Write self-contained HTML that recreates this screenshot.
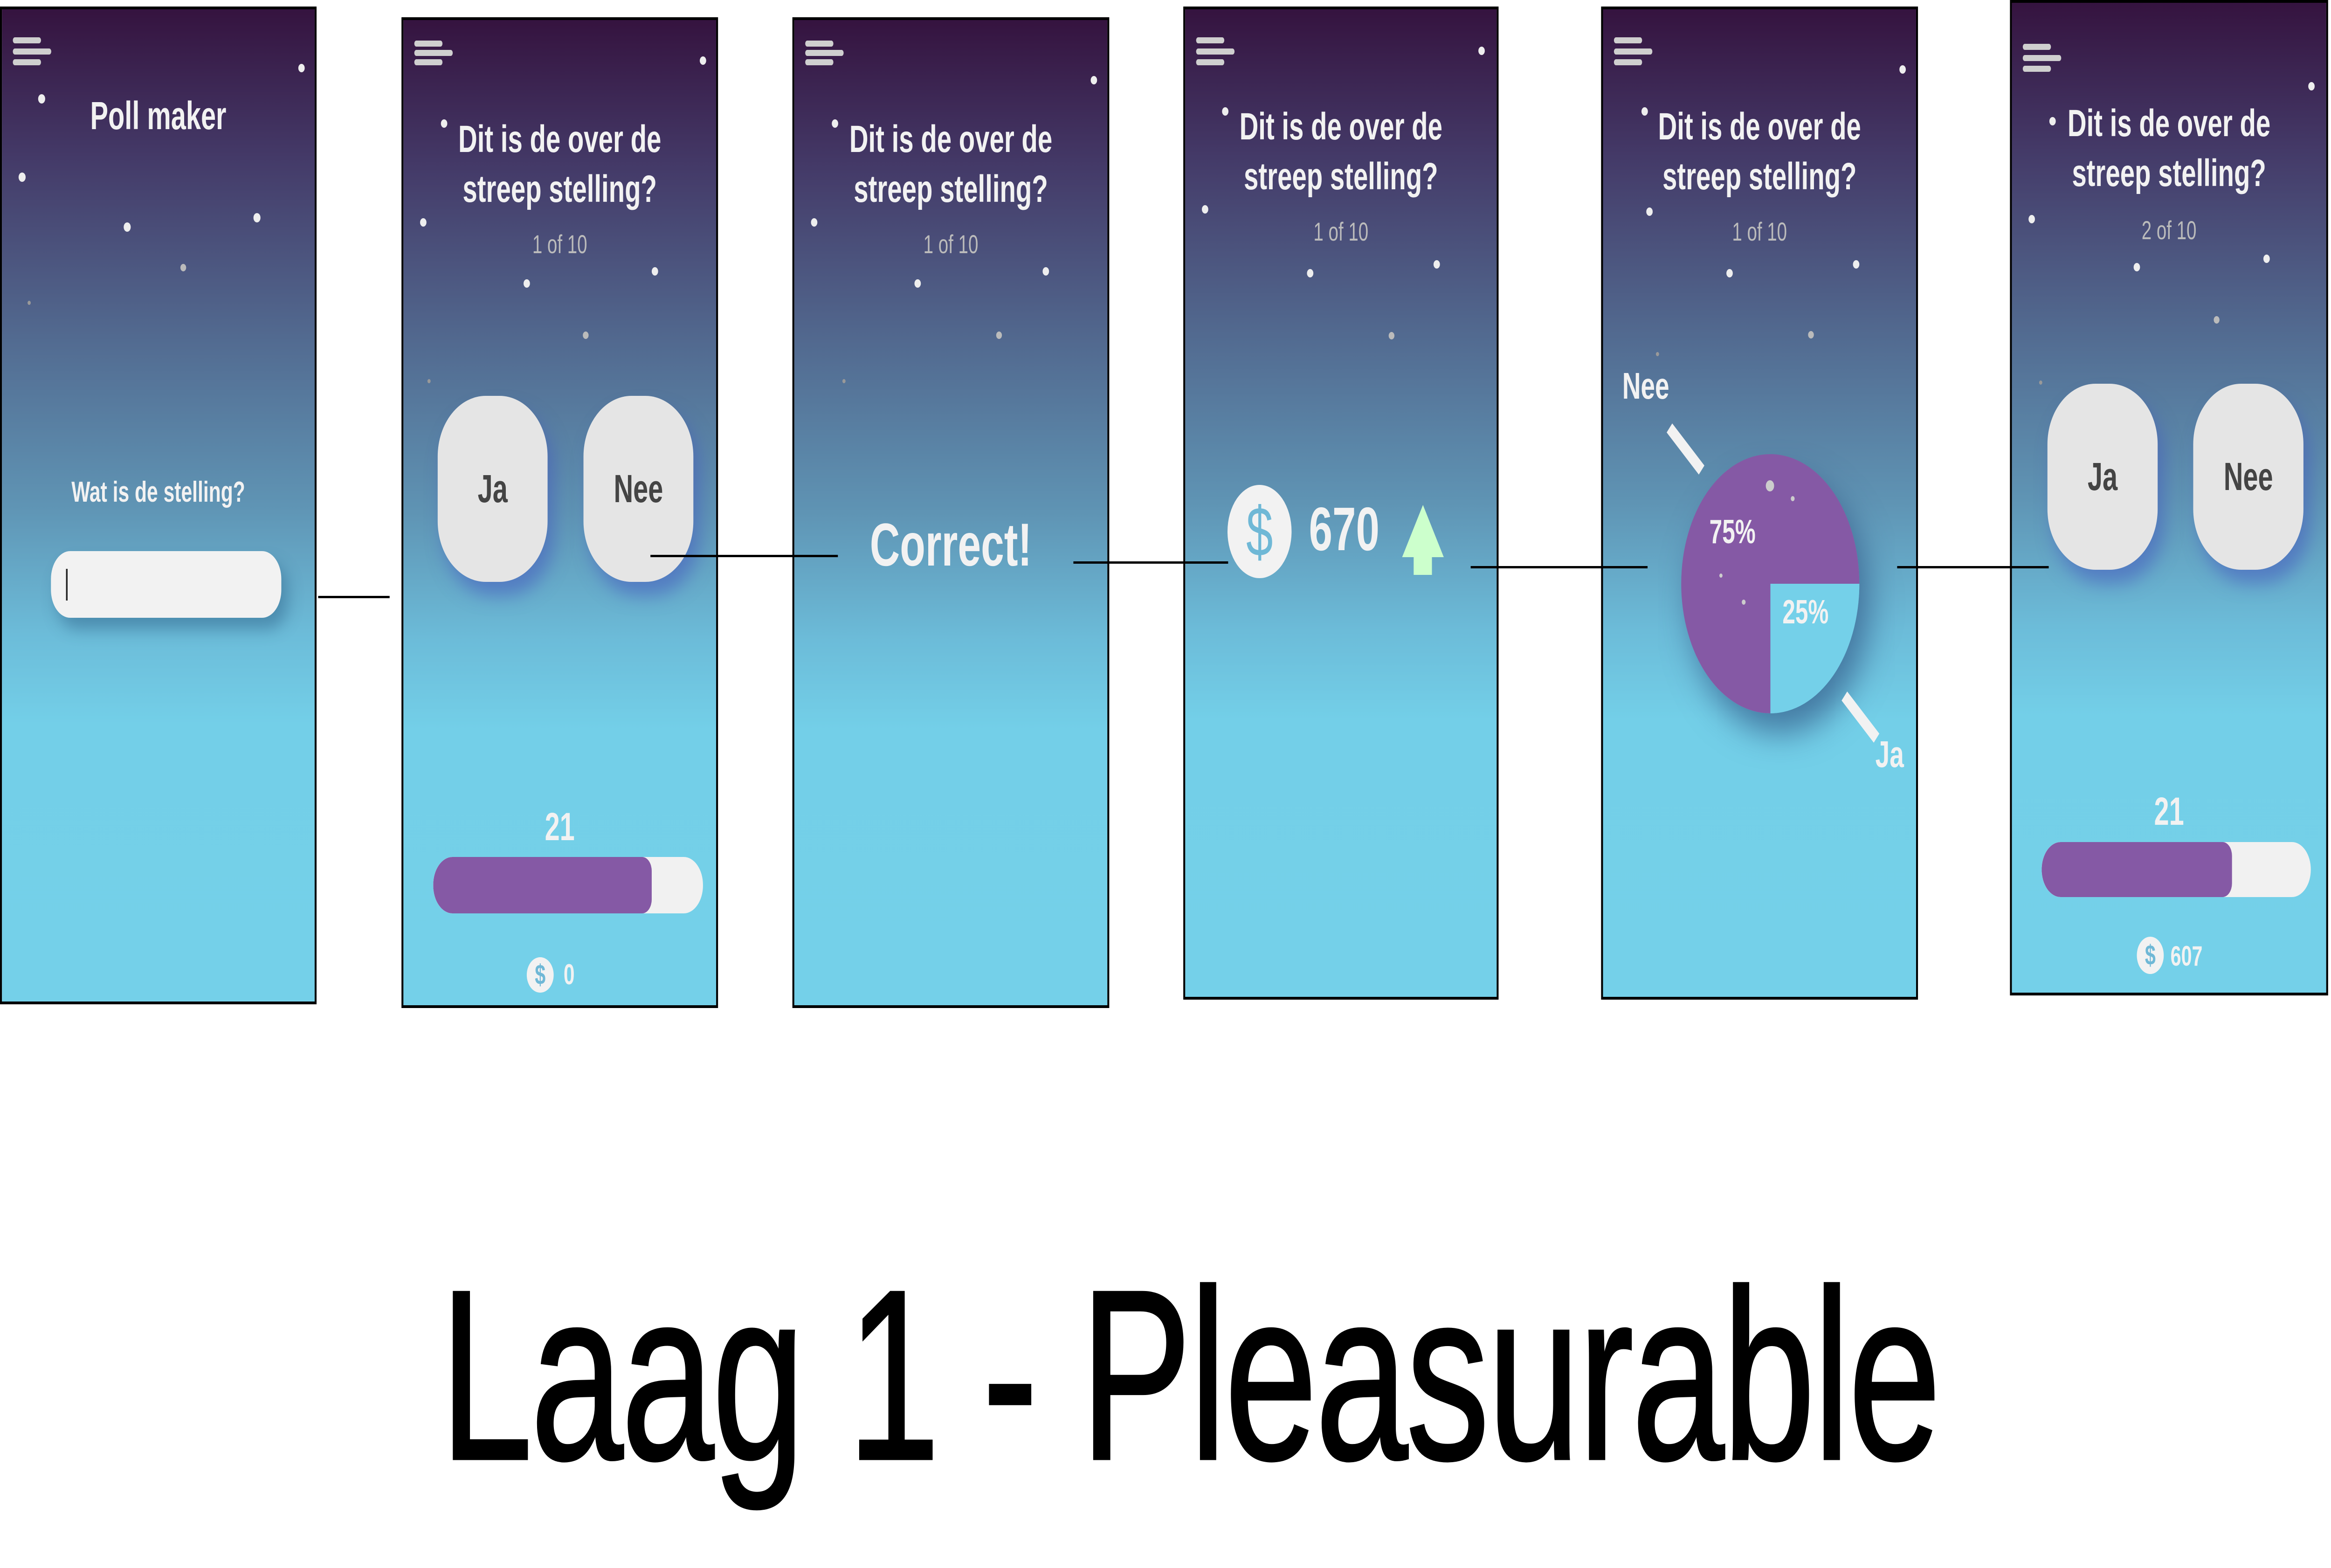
<!DOCTYPE html>
<html><head><meta charset="utf-8"><style>
html,body{margin:0;padding:0;background:#fff;overflow:hidden;}
body{width:100%;height:100%;position:relative;font-family:"Liberation Sans",sans-serif;}
#root{position:absolute;left:0;top:0;width:7275px;height:3363px;overflow:hidden;transform-origin:0 0;background:#fff;}
.s{position:absolute;box-sizing:border-box;border:6px solid #000;overflow:hidden;
background:linear-gradient(180deg,#35133f 0%,#443a68 15%,#526a90 33%,#5f94b4 50%,#6cbcd9 63%,#73cfe8 72%,#74d0e9 100%);}
.a{position:absolute;}
.hb{position:absolute;height:13px;border-radius:7px;background:#cfcfcf;left:34px;}
.t{position:absolute;left:0;right:0;text-align:center;color:#f2f2f2;font-weight:bold;}
.st{position:absolute;border-radius:50%;background:#eee;}
.btn{position:absolute;background:#e5e5e5;border-radius:150px/130px;box-shadow:20px 30px 45px rgba(70,90,190,.55);color:#444;font-weight:bold;font-size:84px;display:flex;align-items:center;justify-content:center;}
.bar{position:absolute;background:#f1f1f1;border-radius:60px;overflow:hidden;}
.bar i{position:absolute;left:0;top:0;bottom:0;background:#8559a5;border-radius:60px 30px 30px 60px;}
.coin{position:absolute;border-radius:50%;background:#f2f2f2;color:#6fb8d6;font-weight:bold;text-align:center;}
.ln{position:absolute;height:5px;background:#000;}
</style></head><body>
<div id="root">
<div class="ln" style="left:993px;top:1278px;width:223px"></div>
<div class="ln" style="left:2030px;top:1190px;width:585px;z-index:5"></div>
<div class="ln" style="left:3350px;top:1204px;width:483px;z-index:5"></div>
<div class="ln" style="left:4590px;top:1214px;width:552px;z-index:5"></div>
<div class="ln" style="left:5921px;top:1214px;width:473px;z-index:5"></div>

<div class="s" style="left:0px;top:14px;width:988px;height:2140px">
<div class="hb" style="top:60px;width:88px"></div><div class="hb" style="top:84px;width:120px"></div><div class="hb" style="top:107px;width:88px"></div>
<div class="st" style="left:113px;top:182px;width:22px;height:20px"></div>
<div class="st" style="left:52px;top:350px;width:22px;height:20px"></div>
<div class="st" style="left:925px;top:117px;width:20px;height:18px"></div>
<div class="st" style="left:380px;top:457px;width:22px;height:20px"></div>
<div class="st" style="left:785px;top:437px;width:22px;height:20px"></div>
<div class="st" style="left:557px;top:546px;width:18px;height:16px;background:#bbb"></div>
<div class="st" style="left:80px;top:625px;width:10px;height:9px;background:#999"></div>
<div class="t" style="top:180px;font-size:84px">Poll maker</div>
<div class="t" style="top:1000px;font-size:62px">Wat is de stelling?</div>
<div class="a" style="left:153px;top:1162px;width:719px;height:143px;background:#f2f2f2;border-radius:60px;box-shadow:20px 25px 40px rgba(40,90,130,.45)"></div>
<div class="a" style="left:200px;top:1200px;width:5px;height:68px;background:#222"></div>
</div>

<div class="s" style="left:1253px;top:37px;width:988px;height:2125px">
<div class="hb" style="top:44px;width:88px"></div><div class="hb" style="top:64px;width:120px"></div><div class="hb" style="top:84px;width:88px"></div>
<div class="st" style="left:117px;top:213px;width:20px;height:18px"></div>
<div class="st" style="left:52px;top:425px;width:20px;height:18px"></div>
<div class="st" style="left:925px;top:78px;width:20px;height:18px"></div>
<div class="st" style="left:375px;top:556px;width:20px;height:18px"></div>
<div class="st" style="left:775px;top:530px;width:20px;height:18px"></div>
<div class="st" style="left:560px;top:668px;width:18px;height:16px;background:#bbb"></div>
<div class="st" style="left:75px;top:770px;width:10px;height:9px;background:#999"></div>
<div class="t" style="top:202px;font-size:82px;line-height:107px">Dit is de over de<br>streep stelling?</div>
<div class="t" style="top:448px;font-size:56px;color:#bbb;font-weight:normal">1 of 10</div>
<div class="btn" style="left:107px;top:806px;width:343px;height:399px">Ja</div>
<div class="btn" style="left:562px;top:806px;width:343px;height:399px">Nee</div>
<div class="t" style="top:1682px;font-size:84px">21</div>
<div class="bar" style="left:93px;top:1795px;width:842px;height:121px"><i style="width:682px"></i></div>
<div class="coin" style="left:385px;top:2010px;width:84px;height:76px;font-size:60px;line-height:76px">$</div>
<div class="t" style="left:500px;right:auto;top:2012px;font-size:62px">0</div>
</div>

<div class="s" style="left:2473px;top:37px;width:989px;height:2125px">
<div class="hb" style="top:44px;width:88px"></div><div class="hb" style="top:64px;width:120px"></div><div class="hb" style="top:84px;width:88px"></div>
<div class="st" style="left:117px;top:213px;width:20px;height:18px"></div>
<div class="st" style="left:52px;top:425px;width:20px;height:18px"></div>
<div class="st" style="left:925px;top:120px;width:20px;height:18px"></div>
<div class="st" style="left:375px;top:556px;width:20px;height:18px"></div>
<div class="st" style="left:775px;top:530px;width:20px;height:18px"></div>
<div class="st" style="left:630px;top:668px;width:18px;height:16px;background:#bbb"></div>
<div class="st" style="left:150px;top:770px;width:10px;height:9px;background:#999"></div>
<div class="t" style="top:202px;font-size:82px;line-height:107px">Dit is de over de<br>streep stelling?</div>
<div class="t" style="top:448px;font-size:56px;color:#bbb;font-weight:normal">1 of 10</div>
<div class="t" style="top:1050px;font-size:130px">Correct!</div>
</div>

<div class="s" style="left:3693px;top:14px;width:984px;height:2130px">
<div class="hb" style="top:60px;width:88px"></div><div class="hb" style="top:84px;width:120px"></div><div class="hb" style="top:107px;width:88px"></div>
<div class="st" style="left:115px;top:210px;width:20px;height:18px"></div>
<div class="st" style="left:52px;top:420px;width:20px;height:18px"></div>
<div class="st" style="left:915px;top:80px;width:20px;height:18px"></div>
<div class="st" style="left:380px;top:557px;width:20px;height:18px"></div>
<div class="st" style="left:775px;top:538px;width:20px;height:18px"></div>
<div class="st" style="left:635px;top:692px;width:18px;height:16px;background:#bbb"></div>
<div class="t" style="top:198px;font-size:82px;line-height:107px">Dit is de over de<br>streep stelling?</div>
<div class="t" style="top:444px;font-size:56px;color:#bbb;font-weight:normal">1 of 10</div>
<div class="coin" style="left:132px;top:1020px;width:200px;height:200px;font-size:150px;line-height:200px;font-weight:normal">$</div>
<div class="t" style="left:386px;right:auto;top:1040px;font-size:132px;line-height:150px">670</div>
<svg class="a" style="left:675px;top:1063px" width="135" height="150" viewBox="0 0 135 150"><path d="M67 0 L132 112 L95 112 L95 150 L38 150 L38 112 L2 112 Z" fill="#ccffcc"/></svg>
</div>

<div class="s" style="left:4997px;top:14px;width:989px;height:2130px">
<div class="hb" style="top:60px;width:88px"></div><div class="hb" style="top:84px;width:120px"></div><div class="hb" style="top:107px;width:88px"></div>
<div class="st" style="left:120px;top:210px;width:20px;height:18px"></div>
<div class="st" style="left:135px;top:425px;width:20px;height:18px"></div>
<div class="st" style="left:925px;top:120px;width:20px;height:18px"></div>
<div class="st" style="left:385px;top:557px;width:20px;height:18px"></div>
<div class="st" style="left:780px;top:538px;width:20px;height:18px"></div>
<div class="st" style="left:640px;top:690px;width:18px;height:16px;background:#bbb"></div>
<div class="st" style="left:165px;top:735px;width:10px;height:9px;background:#999"></div>
<div class="t" style="top:198px;font-size:82px;line-height:107px">Dit is de over de<br>streep stelling?</div>
<div class="t" style="top:444px;font-size:56px;color:#bbb;font-weight:normal">1 of 10</div>
<div class="a" style="left:244px;top:954px;width:556px;height:556px;border-radius:50%;background:conic-gradient(#8559a5 0 90deg,#74d0e9 90deg 180deg,#8559a5 180deg 360deg);box-shadow:30px 45px 80px rgba(40,70,120,.6)"></div>
<div class="st" style="left:508px;top:1010px;width:26px;height:24px;background:#ccc"></div>
<div class="st" style="left:586px;top:1044px;width:12px;height:11px;background:#ccc"></div>
<div class="st" style="left:363px;top:1210px;width:10px;height:9px;background:#ccc"></div>
<div class="st" style="left:433px;top:1266px;width:12px;height:11px;background:#ccc"></div>
<div class="t" style="left:332px;right:auto;top:1080px;font-size:72px">75%</div>
<div class="t" style="left:560px;right:auto;top:1252px;font-size:72px">25%</div>
<div class="t" style="left:60px;right:auto;top:762px;font-size:80px">Nee</div>
<div class="a" style="left:190px;top:930px;width:135px;height:26px;background:#f2f2f2;transform:rotate(42deg)"></div>
<div class="a" style="left:736px;top:1505px;width:135px;height:26px;background:#f2f2f2;transform:rotate(42deg)"></div>
<div class="t" style="left:850px;right:auto;top:1552px;font-size:80px">Ja</div>
</div>

<div class="s" style="left:6273px;top:0px;width:993px;height:2135px">
<div class="hb" style="top:88px;width:88px"></div><div class="hb" style="top:112px;width:120px"></div><div class="hb" style="top:135px;width:88px"></div>
<div class="st" style="left:117px;top:245px;width:20px;height:18px"></div>
<div class="st" style="left:52px;top:455px;width:20px;height:18px"></div>
<div class="st" style="left:925px;top:170px;width:20px;height:18px"></div>
<div class="st" style="left:380px;top:558px;width:20px;height:18px"></div>
<div class="st" style="left:785px;top:540px;width:20px;height:18px"></div>
<div class="st" style="left:630px;top:672px;width:18px;height:16px;background:#bbb"></div>
<div class="st" style="left:85px;top:810px;width:10px;height:9px;background:#999"></div>
<div class="t" style="top:205px;font-size:82px;line-height:107px">Dit is de over de<br>streep stelling?</div>
<div class="t" style="top:455px;font-size:56px;color:#bbb;font-weight:normal">2 of 10</div>
<div class="btn" style="left:111px;top:817px;width:344px;height:399px">Ja</div>
<div class="btn" style="left:566px;top:817px;width:344px;height:399px">Nee</div>
<div class="t" style="top:1686px;font-size:84px">21</div>
<div class="bar" style="left:93px;top:1800px;width:840px;height:118px"><i style="width:594px"></i></div>
<div class="coin" style="left:390px;top:2003px;width:84px;height:80px;font-size:60px;line-height:80px">$</div>
<div class="t" style="left:495px;right:auto;top:2010px;font-size:60px">607</div>
</div>

<div class="a" style="left:0;width:7275px;top:2650px;text-align:center;font-size:520px;line-height:600px;color:#000;letter-spacing:-6px;-webkit-text-stroke:5px #000;padding-left:150px;box-sizing:border-box;white-space:nowrap">Laag 1 - Pleasurable</div>
</div>
<script>
(function(){var r=document.getElementById('root');var w=window.innerWidth,h=window.innerHeight;
if(w&&h&&(Math.abs(w-7275)>2||Math.abs(h-3363)>2)){r.style.transform='scale('+(w/7275)+','+(h/3363)+')';}})();
</script>
</body></html>
